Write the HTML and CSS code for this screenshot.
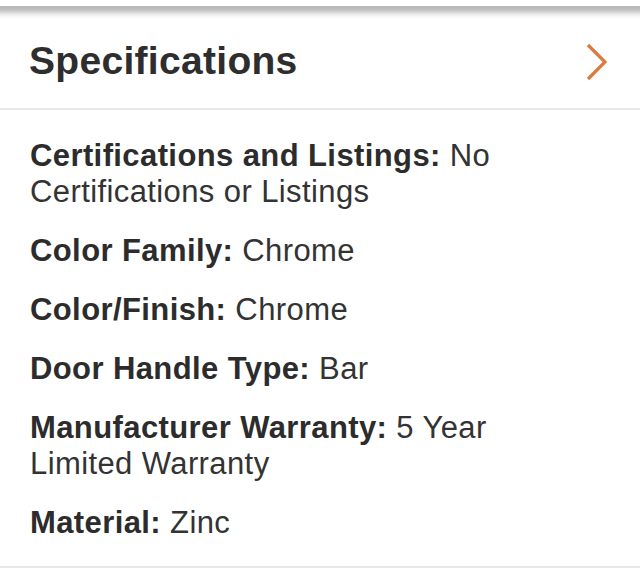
FILE: index.html
```html
<!DOCTYPE html>
<html>
<head>
<meta charset="utf-8">
<link rel="stylesheet" href="styles.css">
</head>
<body>
<div class="topbar"></div>
<section class="specs">
  <div class="specs-header">
    <h2 class="specs-title">Specifications</h2>
    <svg class="chevron" width="24" height="40" viewBox="0 0 24 40" aria-hidden="true">
      <polyline points="3,3 20,20 3,37" fill="none" stroke="#dc7a3e" stroke-width="3.2" stroke-linecap="butt" stroke-linejoin="miter"/>
    </svg>
  </div>
  <ul class="spec-list">
    <li class="spec-item"><span class="spec-label">Certifications and Listings:</span> No Certifications or Listings</li>
    <li class="spec-item"><span class="spec-label">Color Family:</span> Chrome</li>
    <li class="spec-item"><span class="spec-label">Color/Finish:</span> Chrome</li>
    <li class="spec-item"><span class="spec-label">Door Handle Type:</span> Bar</li>
    <li class="spec-item"><span class="spec-label">Manufacturer Warranty:</span> 5 Year Limited Warranty</li>
    <li class="spec-item"><span class="spec-label">Material:</span> Zinc</li>
  </ul>
</section>
</body>
</html>
```

FILE: styles.css
```css
html, body {
  margin: 0;
  padding: 0;
  background: #ffffff;
}

body {
  font-family: "Liberation Sans", Arial, Helvetica, sans-serif;
  color: #333333;
  width: 640px;
  overflow: hidden;
}

.topbar {
  height: 6px;
  background: #ffffff;
  box-shadow: 0 4px 9px rgba(0, 0, 0, 0.55);
  margin: 0 -10px;
  position: relative;
  z-index: 1;
}

.specs-header {
  display: flex;
  align-items: center;
  justify-content: space-between;
  padding: 32px 31px 25px 29px;
  border-bottom: 2px solid #e8e8e8;
}

.specs-title {
  margin: 0;
  font-size: 39px;
  line-height: 45px;
  font-weight: 700;
  letter-spacing: 0.3px;
  color: #2e2e2e;
}

.chevron {
  display: block;
  margin-top: 2px;
}

.spec-list {
  list-style: none;
  margin: 0;
  padding: 28px 60px 25px 30px;
  border-bottom: 2px solid #e8e8e8;
  display: flex;
  flex-direction: column;
  gap: 23px;
}

.spec-item {
  font-size: 31px;
  line-height: 36px;
  letter-spacing: 0.4px;
  color: #333333;
}

.spec-label {
  font-weight: 700;
  color: #2c2c2c;
}
```
